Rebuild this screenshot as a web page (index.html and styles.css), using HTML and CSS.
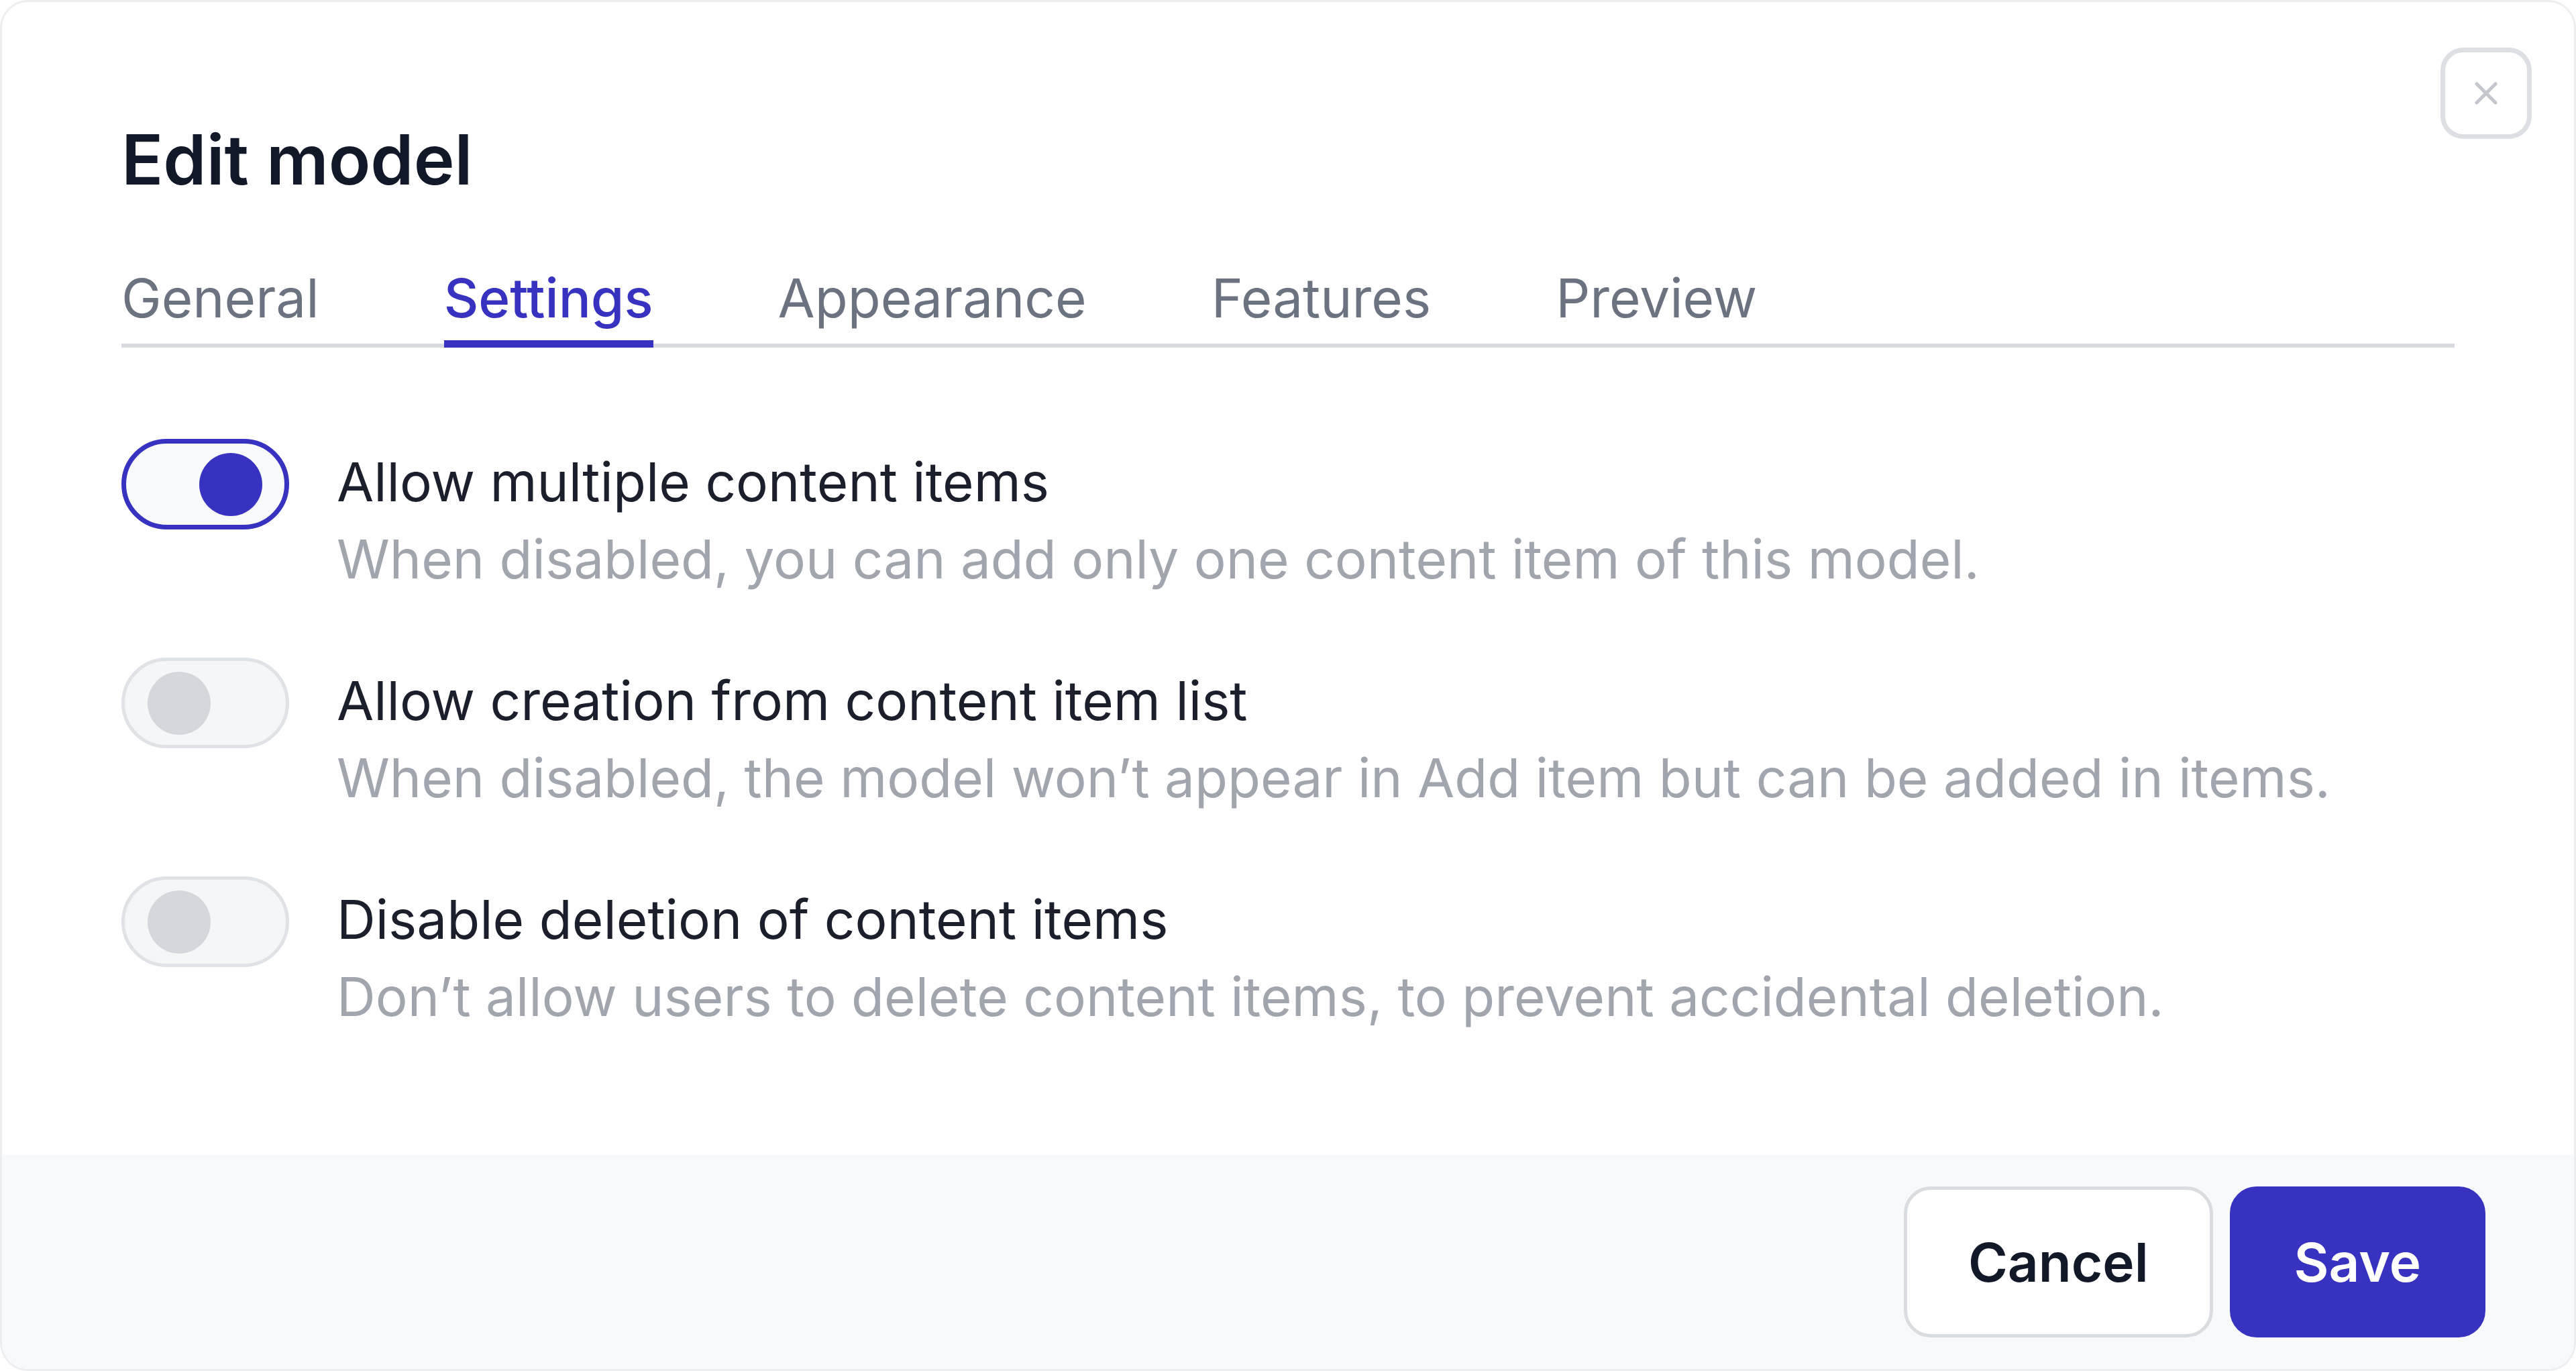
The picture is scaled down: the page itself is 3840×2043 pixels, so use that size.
FILE: index.html
```html
<!DOCTYPE html>
<html lang="en">
<head>
<meta charset="utf-8">
<title>Edit model</title>
<link rel="stylesheet" href="styles.css">
</head>
<body>
<div class="modal">
  <button class="close" aria-label="Close">
    <svg viewBox="0 0 24 24" width="48" height="48" fill="none" stroke="#c4c8ce" stroke-width="2.6" stroke-linecap="round"><path d="M5 5L19 19M19 5L5 19"/></svg>
  </button>
  <div class="content">
    <h1 class="title">Edit model</h1>
    <nav class="tabs">
      <span class="tab">General</span>
      <span class="tab active">Settings</span>
      <span class="tab">Appearance</span>
      <span class="tab">Features</span>
      <span class="tab">Preview</span>
    </nav>
    <div class="settings">
      <div class="row">
        <span class="toggle on"><span class="knob"></span></span>
        <div class="text">
          <div class="label">Allow multiple content items</div>
          <div class="desc">When disabled, you can add only one content item of this model.</div>
        </div>
      </div>
      <div class="row">
        <span class="toggle"><span class="knob"></span></span>
        <div class="text">
          <div class="label">Allow creation from content item list</div>
          <div class="desc">When disabled, the model won’t appear in Add item but can be added in items.</div>
        </div>
      </div>
      <div class="row">
        <span class="toggle"><span class="knob"></span></span>
        <div class="text">
          <div class="label">Disable deletion of content items</div>
          <div class="desc">Don’t allow users to delete content items, to prevent accidental deletion.</div>
        </div>
      </div>
    </div>
  </div>
  <div class="footer">
    <button class="btn cancel">Cancel</button>
    <button class="btn save">Save</button>
  </div>
</div>
</body>
</html>
```
FILE: styles.css
```css
* { box-sizing: border-box; }
html, body { margin: 0; padding: 0; background: #ffffff; }
body { font-family: Inter, "Noto Sans", sans-serif; }

.modal {
  position: relative;
  height: 2043px;
  display: flex;
  flex-direction: column;
  background: #ffffff;
  border: 3px solid #eceef1;
  border-radius: 42px;
  overflow: hidden;
}

.close {
  position: absolute;
  top: 68px;
  right: 63px;
  width: 136px;
  height: 136px;
  border: 7px solid #dcdfe3;
  border-radius: 34px;
  background: #ffffff;
  display: flex;
  align-items: center;
  justify-content: center;
  padding: 0;
}

.content {
  flex: 1;
  padding: 172px 178px 0 178px;
}

.title {
  margin: 0;
  font-size: 103px;
  line-height: 125px;
  font-weight: 600;
  color: #111827;
}

.tabs {
  margin-top: 96px;
  display: flex;
  gap: 186px;
  border-bottom: 6px solid #d7dade;
}

.tab {
  position: relative;
  font-size: 80px;
  line-height: 96px;
  padding-bottom: 20px;
  color: #6b7280;
}

.tab.active {
  color: #3832c0;
  font-weight: 500;
}

.tab.active::after {
  content: "";
  position: absolute;
  left: 0;
  right: 0;
  bottom: -6px;
  height: 11px;
  background: #3832c0;
}

.settings {
  margin-top: 142px;
  display: flex;
  flex-direction: column;
  gap: 96px;
}

.row {
  display: flex;
  align-items: flex-start;
  gap: 71px;
}

.toggle {
  flex: none;
  margin-top: -6px;
  width: 250px;
  height: 135px;
  border-radius: 68px;
  border: 5px solid #dfe2e6;
  background: #f5f6f8;
  display: flex;
  align-items: center;
  padding: 0 34px;
}

.toggle.on {
  border: 7px solid #3832c0;
  background: #f9fafb;
  justify-content: flex-end;
  padding: 0 33px;
}

.knob {
  width: 94px;
  height: 94px;
  border-radius: 50%;
  background: #d4d7dc;
}

.toggle.on .knob { background: #3832c0; }

.text { font-size: 80px; line-height: 115px; }

.label { color: #1a1f2b; }

.desc { color: #a1a6ae; }

.footer {
  flex: none;
  height: 319px;
  background: #f8f9fb;
  display: flex;
  justify-content: flex-end;
  align-items: center;
  gap: 25px;
  padding: 0 132px 0 0;
}

.btn {
  height: 225px;
  border-radius: 40px;
  font-family: Inter, "Noto Sans", sans-serif;
  font-size: 80px;
  font-weight: 600;
  padding: 0 91px;
}

.cancel {
  background: #ffffff;
  border: 5px solid #d9dce0;
  color: #111827;
}

.save {
  background: #3832c0;
  border: 5px solid #3832c0;
  color: #ffffff;
}
```
